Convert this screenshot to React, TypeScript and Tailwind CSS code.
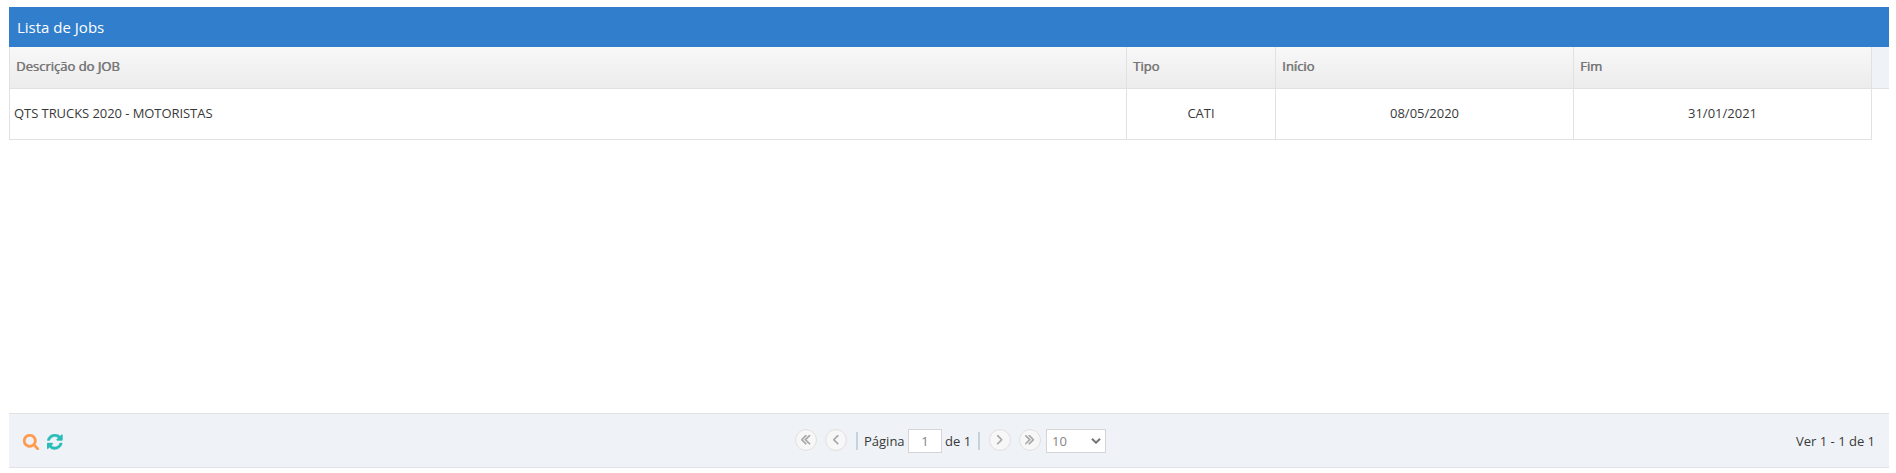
import React from 'react';

const ANGLE =
  'M627 544q0 13-10 23l-393 393 393 393q10 10 10 23t-10 23l-50 50q-10 10-23 10t-23-10l-466-466q-10-10-10-23t10-23l466-466q10-10 23-10t23 10l50 50q10 10 10 23z';

function Angle({ double = false, flip = false }: { double?: boolean; flip?: boolean }) {
  return (
    <svg
      viewBox={double ? '45 467 966 986' : '45 467 582 986'}
      className={`${double ? 'w-[9.2px]' : 'w-[5.5px]'} h-[9.4px] fill-[#a6a6a6] stroke-[#a6a6a6] stroke-[50] ${flip ? '-scale-x-100' : ''}`}
    >
      <path d={ANGLE} />
      {double && <path d={ANGLE} transform="translate(384 0)" />}
    </svg>
  );
}

function PagerButton({ label, className = '', children }: { label: string; className?: string; children: React.ReactNode }) {
  return (
    <button
      aria-label={label}
      className={`flex size-[22px] shrink-0 items-center justify-center rounded-full border border-[#e0e0e0] bg-[#f7f7f7] ${className}`}
    >
      {children}
    </button>
  );
}

function SearchIcon() {
  return (
    <svg viewBox="0 128 1664 1664" className="size-4 fill-[#ff9a4d] stroke-[#ff9a4d] stroke-[40]">
      <path d="M1152 832q0-185-131.5-316.5t-316.5-131.5-316.5 131.5-131.5 316.5 131.5 316.5 316.5 131.5 316.5-131.5 131.5-316.5zm512 832q0 52-38 90t-90 38q-54 0-90-38l-343-342q-179 124-399 124-143 0-273.5-55.5t-225-150-150-225-55.5-273.5 55.5-273.5 150-225 225-150 273.5-55.5 273.5 55.5 225 150 150 225 55.5 273.5q0 220-124 399l343 343q37 37 37 90z" />
    </svg>
  );
}

function RefreshIcon() {
  return (
    <svg viewBox="128 128 1536 1536" className="size-[15.5px] fill-[#29bdb9] stroke-[#29bdb9] stroke-[40]">
      <path d="M1639 1056q0 5-1 7-64 268-268 434.5t-478 166.5q-146 0-282.5-55t-243.5-157l-129 129q-19 19-45 19t-45-19-19-45v-448q0-26 19-45t45-19h448q26 0 45 19t19 45-19 45l-137 137q71 66 161 102t187 36q134 0 250-65t186-179q11-17 53-117 8-23 30-23h192q13 0 22.5 9.5t9.5 22.5zm25-800v448q0 26-19 45t-45 19h-448q-26 0-45-19t-19-45 19-45l138-138q-148-137-349-137-134 0-250 65t-186 179q-11 17-53 117-8 23-30 23h-199q-13 0-22.5-9.5t-9.5-22.5v-7q65-268 270-434.5t480-166.5q146 0 284 55.5t245 156.5l130-129q19-19 45-19t45 19 19 45z" />
    </svg>
  );
}

const columns = ['Descrição do JOB', 'Tipo', 'Início', 'Fim'];
const jobs = [['QTS TRUCKS 2020 - MOTORISTAS', 'CATI', '08/05/2020', '31/01/2021']];

export default function App() {
  return (
    <main className="h-[473px] bg-white pt-[7px] pr-[7px] pl-[9px] font-['Open_Sans',sans-serif] text-[13px] leading-[18px] text-[#393939]">
      <section className="flex h-[461px] flex-col">
        <h1 className="flex h-10 shrink-0 items-center bg-[#307ecc] pl-2 text-[15px] text-white">Lista de Jobs</h1>

        <div className="flex h-[42px] shrink-0 border-b border-[#e1e1e1] bg-[#eff3f8]">
          <div className="grid w-[1863px] grid-cols-[1118px_149px_298px_298px] bg-linear-to-b from-[#f8f8f8] to-[#ececec]">
            {columns.map((c) => (
              <div
                key={c}
                className="border-r border-[#e1e1e1] pt-[10px] pl-1.5 text-[#777] [text-shadow:0.6px_0_#777] first:border-l"
              >
                {c}
              </div>
            ))}
          </div>
        </div>

        <div className="flex-1">
          {jobs.map((job) => (
            <div key={job[0]} className="grid h-[51px] w-[1863px] grid-cols-[1118px_149px_298px_298px] border-b border-[#e1e1e1]">
              {job.map((v, i) => (
                <div
                  key={i}
                  className="flex items-center justify-center border-r border-[#e1e1e1] pb-0.5 first:justify-start first:border-l first:pl-1 first:tracking-[-0.06px]"
                >
                  {v}
                </div>
              ))}
            </div>
          ))}
        </div>

        <footer className="grid h-[55px] shrink-0 grid-cols-[786px_1fr_auto] border-y border-[#e1e1e1] bg-[#eff3f8]">
          <div className="flex items-start gap-2 pt-5 pl-3.5">
            <SearchIcon />
            <RefreshIcon />
          </div>
          <div className="flex items-start pt-[15px]">
            <PagerButton label="Primeira página" className="mr-2"><Angle double /></PagerButton>
            <PagerButton label="Página anterior"><Angle /></PagerButton>
            <span className="mt-[3px] mr-1.5 ml-[9px] h-[18px] w-0.5 bg-[#c5d3da]" />
            <span className="mt-[3px] w-11 whitespace-nowrap">Página</span>
            <input
              defaultValue="1"
              aria-label="Número da página"
              className="h-6 w-[34px] border border-[#d5d5d5] bg-white text-center text-[#858585]"
            />
            <span className="mt-[3px] ml-[3px] w-[33px] whitespace-nowrap">de 1</span>
            <span className="mt-[3px] mr-[9px] h-[18px] w-0.5 bg-[#c5d3da]" />
            <PagerButton label="Próxima página" className="mr-2"><Angle flip /></PagerButton>
            <PagerButton label="Última página" className="mr-[5px]"><Angle double flip /></PagerButton>
            <button className="flex h-6 w-[60px] items-center justify-between border border-[#d5d5d5] bg-white pr-1 pl-[5px] text-[#858585]">
              10
              <svg viewBox="0 0 10 6" className="h-1.5 w-2.5 fill-none stroke-[#757575] stroke-2">
                <path d="M1 .7l4 4 4-4" />
              </svg>
            </button>
          </div>
          <div className="pt-[18px] pr-3.5">Ver 1 - 1 de 1</div>
        </footer>
      </section>
    </main>
  );
}
